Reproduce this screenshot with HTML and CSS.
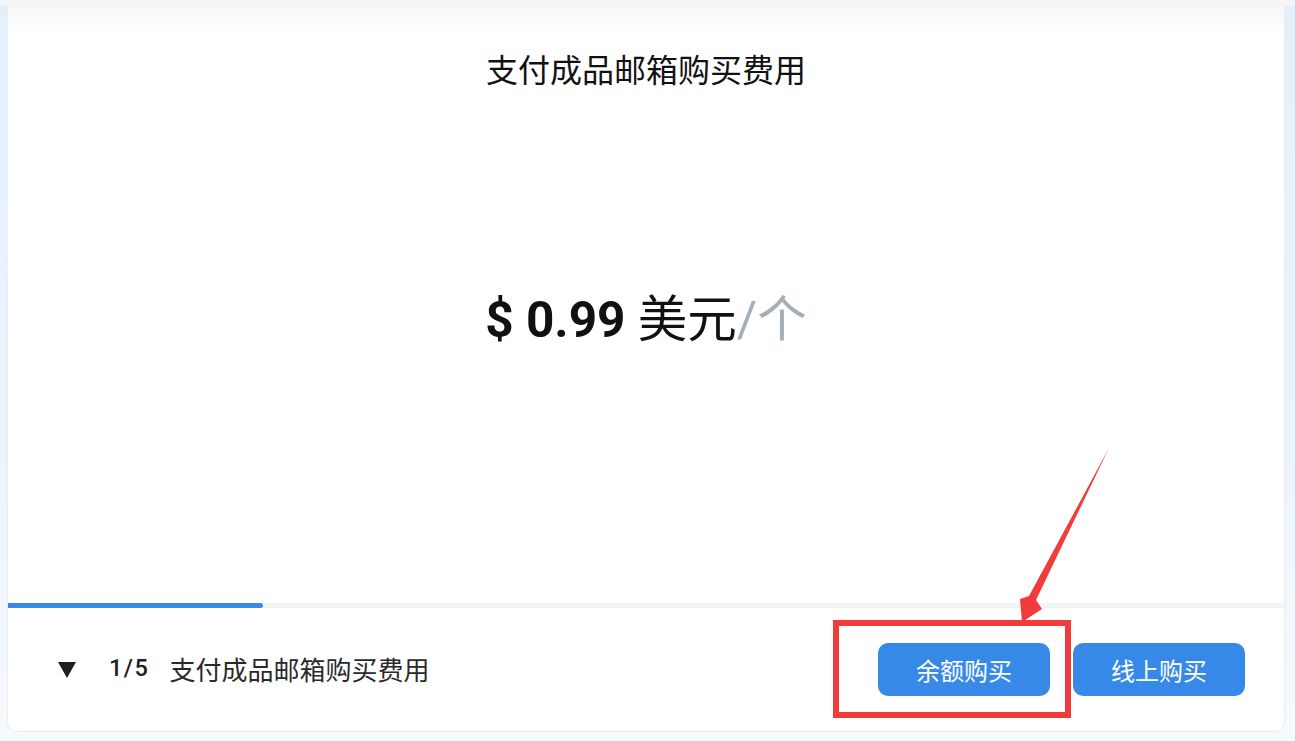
FILE: index.html
```html
<!DOCTYPE html>
<html lang="zh-CN">
<head>
  <meta charset="UTF-8" />
  <title>支付成品邮箱购买费用</title>
  <link rel="stylesheet" href="styles.css">
</head>
<body>

<div class="topbar"></div>

<div class="card">
  <div class="slide">
    <h2 class="slide-title">支付成品邮箱购买费用</h2>
    <div class="price">
      <span class="amount">$ 0.99</span> 美元<span class="unit">/个</span>
    </div>
  </div>

  <div class="progress">
    <div class="progress-fill" style="width: 20%"></div>
  </div>

  <div class="footer">
    <div class="step">
      <span class="caret"></span>
      <span class="step-count">1/5</span>
      <span class="step-name">支付成品邮箱购买费用</span>
    </div>
    <div class="actions">
      <button class="btn">余额购买</button>
      <button class="btn">线上购买</button>
    </div>
  </div>

  <!-- annotation box -->
  <div class="mark-box"></div>
</div>

<svg class="mark-arrow" width="1295" height="741" viewBox="0 0 1295 741">
  <polygon points="1109,448 1036,600 1042,609 1022,622 1020,599 1029,596" fill="#f23b3b" />
</svg>

</body>
</html>
```

FILE: styles.css
```css
* {
  box-sizing: border-box;
}
body {
  margin: 0;
  position: relative;
  background: linear-gradient(#e3f0fc, #eaf4fd 60%, #f7fafd);
  font-family: 'Roboto', 'Noto Sans CJK SC', sans-serif;
  color: #111;
  height: 741px;
  overflow: hidden;
}
.topbar {
  height: 6px;
  background: #f4f5f6;
}
.card {
  position: relative;
  margin-left: 7px;
  width: 1278px;
  background: #fff;
  border: 1px solid #e9edf0;
  border-top: none;
  border-radius: 0 0 10px 10px;
}
.slide {
  height: 597px;
  padding-top: 42px;
  text-align: center;
  background: linear-gradient(#f6f6f6, #fff 28px);
}
.slide-title {
  margin: 0;
  font-family: 'Noto Sans CJK SC', sans-serif;
  font-weight: 400;
  font-size: 32px;
  line-height: 40px;
  color: #111;
}
.price {
  margin-top: 200px;
  font-size: 49.5px;
  line-height: 64px;
  color: #111;
}
.amount {
  font-family: 'Roboto', sans-serif;
  font-weight: 700;
}
.unit {
  color: #a3aeb9;
}
.progress {
  height: 5px;
  background: #f2f3f4;
}
.progress-fill {
  height: 100%;
  background: #3a89e6;
  border-radius: 0 3px 3px 0;
}
.footer {
  height: 123px;
  display: flex;
  align-items: center;
  justify-content: space-between;
  padding: 0 39px 0 50px;
}
.step {
  display: flex;
  align-items: center;
  margin-bottom: 3px;
}
.caret {
  width: 0;
  height: 0;
  border-left: 9px solid transparent;
  border-right: 9px solid transparent;
  border-top: 16px solid #1e1e1e;
  margin-top: 3px;
}
.step-count {
  margin-left: 33px;
  font-size: 23.5px;
  font-weight: 500;
  letter-spacing: 1.5px;
  color: #222;
}
.step-name {
  margin-left: 20px;
  font-family: 'Noto Sans CJK SC', sans-serif;
  font-size: 26px;
  color: #2a2a2a;
}
.actions {
  display: flex;
  gap: 23px;
}
.btn {
  width: 172px;
  height: 53px;
  border: none;
  border-radius: 10px;
  background: #3789e8;
  color: #fff;
  font-family: 'Noto Sans CJK SC', sans-serif;
  font-size: 24px;
  cursor: pointer;
}
.mark-box {
  position: absolute;
  left: 825px;
  top: 614px;
  width: 238px;
  height: 98px;
  border: 6px solid #f23b3b;
}
.mark-arrow {
  position: absolute;
  left: 0;
  top: 0;
  pointer-events: none;
}
```
